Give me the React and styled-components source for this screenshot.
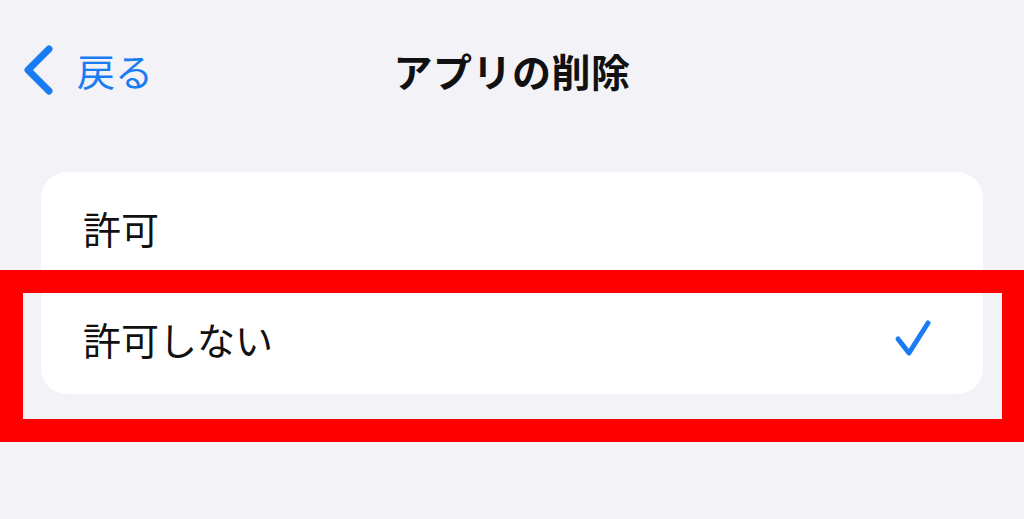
import React from "react";
import styled, { createGlobalStyle } from "styled-components";

const Global = createGlobalStyle`
  html, body {
    margin: 0;
    padding: 0;
    background: #f2f2f7;
    overflow: hidden;
  }
  body {
    font-family: "Noto Sans CJK JP", "Noto Sans", sans-serif;
    color: #000;
  }
`;

const Screen = styled.div`
  width: 1024px;
  height: 519px;
  background: #f2f2f7;
  display: flex;
  flex-direction: column;
  overflow: hidden;
`;

const NavBar = styled.header`
  position: relative;
  height: 142px;
  display: flex;
  align-items: center;
  justify-content: center;
`;

const BackButton = styled.button`
  position: absolute;
  left: 22px;
  top: 45px;
  display: flex;
  align-items: center;
  gap: 23px;
  padding: 0;
  border: 0;
  background: none;
  color: #1a7cf2;
  font-family: inherit;
  font-size: 38px;
  line-height: 48px;
  cursor: pointer;
`;

const Title = styled.h1`
  margin: 0;
  font-size: 39px;
  font-weight: 700;
  letter-spacing: 0.5px;
  margin-top: -2px;
  color: #111;
`;

const Content = styled.main`
  padding: 30px 41px 0;
`;

const Card = styled.ul`
  list-style: none;
  margin: 0;
  padding: 0;
  background: #fff;
  border-radius: 26px;
`;

const Row = styled.li`
  position: relative;
  height: 111px;
  display: flex;
  align-items: center;
  justify-content: space-between;
  padding: 0 50px 0 42px;
  font-size: 38px;
  color: #111;
  & + & {
    box-shadow: inset 0 1px 0 #e6e6ea;
  }
`;

const Highlight = styled.div`
  position: absolute;
  top: -13px;
  left: -41px;
  right: -42px;
  bottom: -48px;
  border: 23px solid #ff0000;
  pointer-events: none;
`;

const Chevron = () => (
  <svg width="32" height="50" viewBox="0 0 32 50" fill="none">
    <path
      d="M27 4 L6 25 L27 46"
      stroke="#1a7cf2"
      strokeWidth="7"
      strokeLinecap="round"
      strokeLinejoin="round"
    />
  </svg>
);

const Check = () => (
  <svg width="40" height="40" viewBox="0 0 40 40" fill="none">
    <path
      d="M5 20 L16 34 L35 4"
      stroke="#1a7cf2"
      strokeWidth="5"
      strokeLinecap="round"
      strokeLinejoin="round"
    />
  </svg>
);

export default function App() {
  return (
    <Screen>
      <Global />
      <NavBar>
        <BackButton>
          <Chevron />
          <span>戻る</span>
        </BackButton>
        <Title>アプリの削除</Title>
      </NavBar>
      <Content>
        <Card>
          <Row>
            <span>許可</span>
          </Row>
          <Row>
            <span>許可しない</span>
            <Check />
            <Highlight />
          </Row>
        </Card>
      </Content>
    </Screen>
  );
}
